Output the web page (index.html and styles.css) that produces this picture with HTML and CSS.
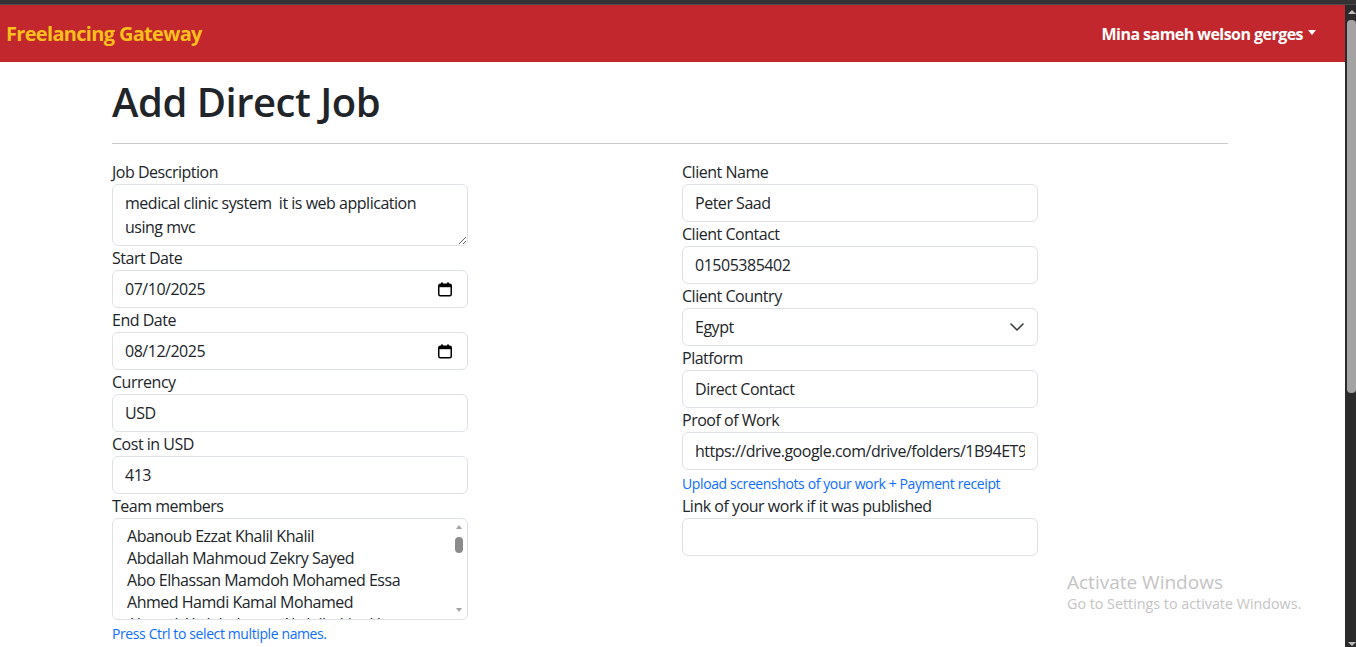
FILE: index.html
```html
<!DOCTYPE html>
<html lang="en">
<head>
<meta charset="utf-8">
<title>Add Direct Job</title>
<link rel="stylesheet" href="styles.css">
</head>
<body>
<div class="topstrip"></div>
<div class="window">
  <div class="page">
    <nav class="navbar">
      <a class="brand" href="#">Freelancing Gateway</a>
      <a class="user" href="#">Mina sameh welson gerges<span class="caret"></span></a>
    </nav>
    <main class="container">
      <h1 class="title">Add Direct Job</h1>
      <hr class="rule">
      <form class="grid">
        <div class="col">
          <label class="lbl">Job Description</label>
          <textarea class="fc ta">medical clinic system  it is web application using mvc</textarea>
          <label class="lbl">Start Date</label>
          <div class="fc date"><span>07/10/2025</span>
            <svg class="cal" width="14" height="15" viewBox="0 0 14 15"><rect x="3" y="0.5" width="2" height="2" fill="#000"/><rect x="9" y="0.5" width="2" height="2" fill="#000"/><rect x="0.75" y="2.25" width="12.5" height="11.5" rx="1.5" fill="none" stroke="#000" stroke-width="1.5"/><rect x="1" y="2" width="12" height="3.2" fill="#000"/></svg>
          </div>
          <label class="lbl">End Date</label>
          <div class="fc date"><span>08/12/2025</span>
            <svg class="cal" width="14" height="15" viewBox="0 0 14 15"><rect x="3" y="0.5" width="2" height="2" fill="#000"/><rect x="9" y="0.5" width="2" height="2" fill="#000"/><rect x="0.75" y="2.25" width="12.5" height="11.5" rx="1.5" fill="none" stroke="#000" stroke-width="1.5"/><rect x="1" y="2" width="12" height="3.2" fill="#000"/></svg>
          </div>
          <label class="lbl">Currency</label>
          <input class="fc" type="text" value="USD">
          <label class="lbl">Cost in USD</label>
          <input class="fc" type="text" value="413">
          <label class="lbl">Team members</label>
          <div class="fc multi">
            <div class="optwrap">
              <ul class="opts">
                <li>Abanoub Ezzat Khalil Khalil</li>
                <li>Abdallah Mahmoud Zekry Sayed</li>
                <li>Abo Elhassan Mamdoh Mohamed Essa</li>
                <li>Ahmed Hamdi Kamal Mohamed</li>
                <li class="partial">Ahmed Abdelrahman Abdelhakim Hassan</li>
              </ul>
            </div>
            <div class="mscroll">
              <span class="arr up"></span>
              <span class="mthumb"></span>
              <span class="spacer"></span>
              <span class="arr down"></span>
            </div>
          </div>
          <div class="help">Press Ctrl to select multiple names.</div>
        </div>
        <div class="col">
          <label class="lbl">Client Name</label>
          <input class="fc" type="text" value="Peter Saad">
          <label class="lbl">Client Contact</label>
          <input class="fc" type="text" value="01505385402">
          <label class="lbl">Client Country</label>
          <div class="fc select"><span>Egypt</span>
            <svg width="16" height="12" viewBox="0 0 16 12"><path d="M2 3l6 6 6-6" fill="none" stroke="#343a40" stroke-width="1.6" stroke-linecap="round" stroke-linejoin="round"/></svg>
          </div>
          <label class="lbl">Platform</label>
          <input class="fc" type="text" value="Direct Contact">
          <label class="lbl">Proof of Work</label>
          <input class="fc" type="text" value="https://drive.google.com/drive/folders/1B94ET9xQk2LmPz7">
          <div class="help">Upload screenshots of your work + Payment receipt</div>
          <label class="lbl">Link of your work if it was published</label>
          <input class="fc" type="text" value="">
        </div>
      </form>
    </main>
    <div class="activate">
      <div class="act1">Activate Windows</div>
      <div class="act2">Go to Settings to activate Windows.</div>
    </div>
  </div>
  <div class="vscroll">
    <span class="varr vup"></span>
    <span class="vthumb"></span>
    <span class="spacer"></span>
    <span class="varr vdown"></span>
  </div>
</div>
</body>
</html>
```

FILE: styles.css
```css
* { box-sizing: border-box; }
html, body { margin: 0; padding: 0; height: 647px; overflow: hidden; }
body {
  font-family: "Open Sans", "Noto Sans", sans-serif;
  font-size: 16px;
  letter-spacing: -0.03em;
  color: #212529;
  background: #fff;
}
.topstrip {
  height: 5px;
  background: #333333;
  border-bottom: 1px solid #4a4a4a;
}
.window {
  display: flex;
  height: 642px;
}
.page {
  flex: 1;
  position: relative;
  overflow: hidden;
  background: #fff;
}
.navbar {
  height: 57px;
  background: #c1272d;
  display: flex;
  align-items: center;
  justify-content: space-between;
  padding: 0 29px 0 6px;
}
.brand {
  color: #fbbf1c;
  font-weight: 700;
  font-size: 20px;
  letter-spacing: -0.034em;
  text-decoration: none;
}
.user {
  color: #fff;
  font-weight: 700;
  font-size: 16px;
  letter-spacing: -0.034em;
  text-decoration: none;
  display: flex;
  align-items: center;
}
.caret {
  display: inline-block;
  margin-left: 5px;
  border-top: 5px solid #fff;
  border-left: 4px solid transparent;
  border-right: 4px solid transparent;
  margin-top: -2px;
}
.container {
  padding: 16px 0 0 112px;
  width: 1228px;
}
.title {
  margin: 0;
  font-size: 40px;
  line-height: 48px;
  font-weight: 600;
  letter-spacing: -0.012em;
  color: #212529;
}
.rule {
  margin: 17px 0 16px;
  border: 0;
  border-top: 1px solid #c8c9ca;
  height: 0;
}
.grid {
  display: grid;
  grid-template-columns: 546px 546px;
  column-gap: 24px;
}
.col {
  display: flex;
  flex-direction: column;
  align-items: flex-start;
}
.lbl {
  display: block;
  line-height: 24px;
  font-size: 16px;
}
.fc {
  display: block;
  width: 356px;
  height: 38px;
  padding: 6px 12px;
  border: 1px solid #dee2e6;
  border-radius: 6px;
  background: #fff;
  font-family: inherit;
  font-size: 16px;
  line-height: 24px;
  letter-spacing: inherit;
  color: #212529;
  margin: 0;
  outline: none;
}
.ta {
  height: 62px;
  resize: vertical;
  overflow: hidden;
}
.date, .select {
  display: flex;
  align-items: center;
  justify-content: space-between;
}
.date { padding-right: 15px; }
.select { padding-right: 12px; }
.multi {
  height: 102px;
  display: flex;
  padding: 0 0 0 12px;
}
.optwrap {
  flex: 1;
  height: 100px;
  overflow: hidden;
}
.opts {
  list-style: none;
  margin: 0;
  padding: 7px 0 0;
}
.opts li {
  line-height: 21px;
  padding: 0 2px 1px;
  white-space: nowrap;
}
.opts li.partial {
  height: 5px;
  overflow: hidden;
  padding: 0 2px;
}
.mscroll {
  width: 12px;
  margin: 2px 2px 2px 0;
  display: flex;
  flex-direction: column;
  align-items: center;
}
.arr {
  width: 0;
  height: 0;
  border-left: 3.5px solid transparent;
  border-right: 3.5px solid transparent;
}
.arr.up { border-bottom: 4px solid #a3a3a3; margin-top: 4px; }
.arr.down { border-top: 4px solid #a3a3a3; margin-bottom: 5px; }
.mthumb {
  width: 8px;
  height: 16px;
  border-radius: 4px;
  background: #8b8b8b;
  margin-top: 8px;
}
.spacer { flex: 1; }
.help {
  margin-top: 3px;
  font-size: 14px;
  line-height: 21px;
  color: #0d6efd;
  letter-spacing: -0.028em;
}
.activate {
  position: absolute;
  left: 1067px;
  top: 565px;
  color: #c4c4c4;
  letter-spacing: 0;
}
.act1 { font-size: 19px; line-height: 24px; }
.act2 { font-size: 14.3px; line-height: 20px; }
.vscroll {
  width: 11px;
  background: #2b2b2b;
  display: flex;
  flex-direction: column;
  align-items: flex-start;
  padding-left: 2px;
}
.varr {
  width: 0;
  height: 0;
  border-left: 4px solid transparent;
  border-right: 4px solid transparent;
  margin-left: 1px;
}
.vup { border-bottom: 4px solid #bdbdbd; margin-top: 5px; }
.vdown { border-top: 4px solid #bdbdbd; margin-bottom: 1px; }
.vthumb {
  width: 9px;
  height: 373px;
  margin-top: 6px;
  border-radius: 4px;
  background: #a3a3a3;
}
```
